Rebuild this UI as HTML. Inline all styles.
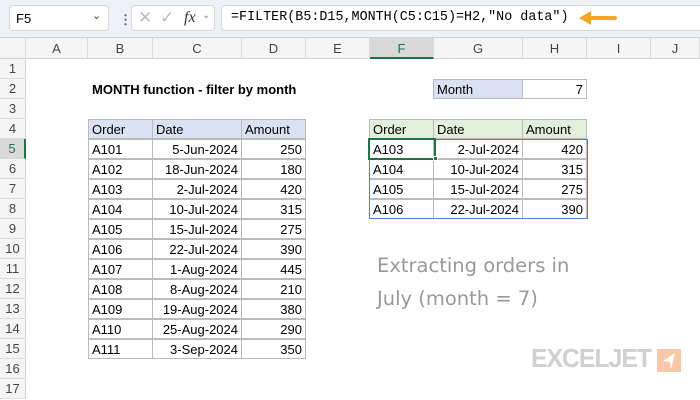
<!DOCTYPE html>
<html><head><style>
*{margin:0;padding:0;box-sizing:border-box}
body{width:700px;height:400px;overflow:hidden;background:#fff;font-family:"Liberation Sans",sans-serif;font-size:13px;color:#000;position:relative}
.a{position:absolute}
.top{left:0;top:0;width:700px;height:38px;background:#eef1f5;border-bottom:1px solid #d4d4d4}
.box{background:#fff;border:1px solid #d6d6d6;border-radius:4px;height:26px;top:5px}
.ch{top:38px;height:21px;background:#f5f5f5;border-bottom:1px solid #d4d4d4;border-right:1px solid #dcdcdc;text-align:center;line-height:21px;color:#444;font-size:13px}
.rh{left:0;width:26px;height:20px;background:#f5f5f5;border-bottom:1px solid #dcdcdc;border-right:1px solid #d4d4d4;text-align:center;line-height:20px;color:#444}
.c{height:20px;line-height:19px;padding:0 3px;border:1px solid #bbb;margin:-1px 0 0 -1px;white-space:nowrap;overflow:hidden}
.r{text-align:right}
.hb{background:#dae1f3}
.hg{background:#e2efda}
</style></head><body>
<div class="a top"></div>
<div class="a box" style="left:9px;width:100px"><span class="a" style="left:6px;top:5px">F5</span><span class="a" style="left:82px;top:3px;font-size:11px;color:#444">&#8964;</span></div>
<div class="a" style="left:119px;top:12px;color:#666;font-weight:bold">&#8942;</div>
<div class="a box" style="left:131px;width:84px"><span class="a" style="left:6px;top:2px;color:#bbb;font-size:17px">&#10005;</span><span class="a" style="left:28px;top:2px;color:#bbb;font-size:17px">&#10003;</span><span class="a" style="left:52px;top:3px;font-family:'Liberation Serif',serif;font-style:italic;font-size:16px;color:#333">fx</span><span class="a" style="left:70px;top:4px;font-size:10px;color:#888">&#8964;</span></div>
<div class="a box" style="left:221px;width:479px;border-right:none;border-radius:4px 0 0 4px"><span class="a" style="left:9px;top:4px;font-family:'Liberation Mono',monospace;font-size:13.4px">=FILTER(B5:D15,MONTH(C5:C15)=H2,"No data")</span>
<svg class="a" style="left:355px;top:4px" width="40" height="16"><path d="M12 8H38" stroke="#f5a623" stroke-width="4" stroke-linecap="round"/><path d="M2 8L14 1V15Z" fill="#f5a623"/></svg></div>

<div class="a ch" style="left:0;width:26px;background:#f5f5f5"></div>
<div class="a ch" style="left:26px;width:62px">A</div>
<div class="a ch" style="left:88px;width:65px">B</div>
<div class="a ch" style="left:153px;width:89px">C</div>
<div class="a ch" style="left:242px;width:64px">D</div>
<div class="a ch" style="left:306px;width:64px">E</div>
<div class="a ch" style="left:370px;width:64px;background:#d9d9d9;border-bottom:2px solid #217346;color:#217346">F</div>
<div class="a ch" style="left:434px;width:89px">G</div>
<div class="a ch" style="left:523px;width:64px">H</div>
<div class="a ch" style="left:587px;width:64px">I</div>
<div class="a ch" style="left:651px;width:49px">J</div>

<div class="a rh" style="top:59px">1</div><div class="a rh" style="top:79px">2</div><div class="a rh" style="top:99px">3</div><div class="a rh" style="top:119px">4</div>
<div class="a rh" style="top:139px;background:#d9d9d9;color:#217346;border-right:2px solid #217346">5</div>
<div class="a rh" style="top:159px">6</div><div class="a rh" style="top:179px">7</div><div class="a rh" style="top:199px">8</div><div class="a rh" style="top:219px">9</div><div class="a rh" style="top:239px">10</div><div class="a rh" style="top:259px">11</div><div class="a rh" style="top:279px">12</div><div class="a rh" style="top:299px">13</div><div class="a rh" style="top:319px">14</div><div class="a rh" style="top:339px">15</div><div class="a rh" style="top:359px">16</div><div class="a rh" style="top:379px">17</div>

<div class="a" style="left:92px;top:82px;font-weight:bold">MONTH function - filter by month</div>

<div class="a c hb" style="left:89px;top:120px;width:65px">Order</div><div class="a c hb" style="left:153px;top:120px;width:90px">Date</div><div class="a c hb" style="left:242px;top:120px;width:65px">Amount</div>
<div class="a c" style="left:89px;top:140px;width:65px">A101</div><div class="a c r" style="left:153px;top:140px;width:90px">5-Jun-2024</div><div class="a c r" style="left:242px;top:140px;width:65px">250</div>
<div class="a c" style="left:89px;top:160px;width:65px">A102</div><div class="a c r" style="left:153px;top:160px;width:90px">18-Jun-2024</div><div class="a c r" style="left:242px;top:160px;width:65px">180</div>
<div class="a c" style="left:89px;top:180px;width:65px">A103</div><div class="a c r" style="left:153px;top:180px;width:90px">2-Jul-2024</div><div class="a c r" style="left:242px;top:180px;width:65px">420</div>
<div class="a c" style="left:89px;top:200px;width:65px">A104</div><div class="a c r" style="left:153px;top:200px;width:90px">10-Jul-2024</div><div class="a c r" style="left:242px;top:200px;width:65px">315</div>
<div class="a c" style="left:89px;top:220px;width:65px">A105</div><div class="a c r" style="left:153px;top:220px;width:90px">15-Jul-2024</div><div class="a c r" style="left:242px;top:220px;width:65px">275</div>
<div class="a c" style="left:89px;top:240px;width:65px">A106</div><div class="a c r" style="left:153px;top:240px;width:90px">22-Jul-2024</div><div class="a c r" style="left:242px;top:240px;width:65px">390</div>
<div class="a c" style="left:89px;top:260px;width:65px">A107</div><div class="a c r" style="left:153px;top:260px;width:90px">1-Aug-2024</div><div class="a c r" style="left:242px;top:260px;width:65px">445</div>
<div class="a c" style="left:89px;top:280px;width:65px">A108</div><div class="a c r" style="left:153px;top:280px;width:90px">8-Aug-2024</div><div class="a c r" style="left:242px;top:280px;width:65px">210</div>
<div class="a c" style="left:89px;top:300px;width:65px">A109</div><div class="a c r" style="left:153px;top:300px;width:90px">19-Aug-2024</div><div class="a c r" style="left:242px;top:300px;width:65px">380</div>
<div class="a c" style="left:89px;top:320px;width:65px">A110</div><div class="a c r" style="left:153px;top:320px;width:90px">25-Aug-2024</div><div class="a c r" style="left:242px;top:320px;width:65px">290</div>
<div class="a c" style="left:89px;top:340px;width:65px">A111</div><div class="a c r" style="left:153px;top:340px;width:90px">3-Sep-2024</div><div class="a c r" style="left:242px;top:340px;width:65px">350</div>

<div class="a c hb" style="left:434px;top:80px;width:90px">Month</div><div class="a c r" style="left:523px;top:80px;width:65px">7</div>

<div class="a c hg" style="left:370px;top:120px;width:65px">Order</div><div class="a c hg" style="left:434px;top:120px;width:90px">Date</div><div class="a c hg" style="left:523px;top:120px;width:65px">Amount</div>
<div class="a c" style="left:370px;top:140px;width:65px">A103</div><div class="a c r" style="left:434px;top:140px;width:90px">2-Jul-2024</div><div class="a c r" style="left:523px;top:140px;width:65px">420</div>
<div class="a c" style="left:370px;top:160px;width:65px">A104</div><div class="a c r" style="left:434px;top:160px;width:90px">10-Jul-2024</div><div class="a c r" style="left:523px;top:160px;width:65px">315</div>
<div class="a c" style="left:370px;top:180px;width:65px">A105</div><div class="a c r" style="left:434px;top:180px;width:90px">15-Jul-2024</div><div class="a c r" style="left:523px;top:180px;width:65px">275</div>
<div class="a c" style="left:370px;top:200px;width:65px">A106</div><div class="a c r" style="left:434px;top:200px;width:90px">22-Jul-2024</div><div class="a c r" style="left:523px;top:200px;width:65px">390</div>
<div class="a" style="left:369px;top:139px;width:219px;height:80px;border:1px solid #4a86c8;z-index:2"></div>
<div class="a" style="left:368px;top:138px;width:68px;height:22px;border:2px solid #217346;z-index:3"></div>
<div class="a" style="left:433px;top:156px;width:5px;height:5px;background:#217346;border:1px solid #fff;z-index:4"></div>

<div class="a" style="left:377px;top:249px;font-size:19.5px;color:#999;font-family:'Comic Sans MS','DejaVu Sans',sans-serif;line-height:33px">Extracting orders in<br>July (month = 7)</div>

<div class="a" style="left:531px;top:343px;font-size:26px;font-weight:bold;color:#d0d0d0;letter-spacing:-1px;transform:scaleX(0.95);transform-origin:left">EXCELJET</div>
<div class="a" style="left:657px;top:349px;width:24px;height:23px;background:#f7c9a8"><svg width="24" height="23"><path d="M18 4L6 12L13 13L14 20Z" fill="#fff"/></svg></div>
</body></html>
